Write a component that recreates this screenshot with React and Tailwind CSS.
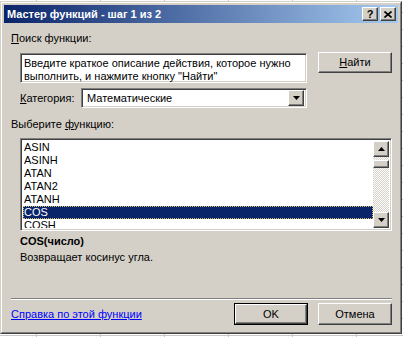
import React from 'react'

const raised = "bg-[#d4d0c8] border border-t-white border-l-white border-r-[#404040] border-b-[#404040] shadow-[inset_-1px_-1px_#808080]"
const sunken = "border border-t-[#808080] border-l-[#808080] border-r-white border-b-white shadow-[inset_1px_1px_#404040,inset_-1px_-1px_#d4d0c8]"

function Arrow({ down }) {
  return (
    <svg width="7" height="4" viewBox="0 0 7 4">
      {down
        ? <path d="M0 0h7L3.5 4z" fill="#000" />
        : <path d="M0 4h7L3.5 0z" fill="#000" />}
    </svg>
  )
}

const functions = ['ASIN', 'ASINH', 'ATAN', 'ATAN2', 'ATANH', 'COS', 'COSH']

export default function App() {
  return (
    <div className="w-[403px] h-[337px] bg-white overflow-hidden font-['Liberation_Sans',Arial,sans-serif] text-[11px] text-black [background-image:linear-gradient(to_right,#c8c8c8_1px,transparent_1px),linear-gradient(to_bottom,#c8c8c8_1px,transparent_1px)] [background-size:64px_100%,100%_17px] [background-position:36px_0,0_12px]">
      {/* Dialog */}
      <div className="mt-[1px] w-[402px] h-[333px] bg-[#d4d0c8] border border-t-[#d4d0c8] border-l-[#d4d0c8] border-r-[#404040] border-b-[#404040]">
        <div className="h-full border border-t-white border-l-white border-r-[#808080] border-b-[#808080] p-[2px] flex flex-col">
          {/* Title bar */}
          <div className="h-[18px] shrink-0 flex items-center pl-[3px] pr-[2px] bg-[linear-gradient(to_right,#0a246a,#a6caf0)]">
            <span className="flex-1 text-white font-bold text-[11px] leading-none">Мастер функций - шаг 1 из 2</span>
            <div className={`w-[16px] h-[14px] flex items-center justify-center font-bold text-[11px] leading-none ${raised}`}>?</div>
            <div className={`ml-[2px] w-[16px] h-[14px] flex items-center justify-center ${raised}`}>
              <svg width="8" height="7" viewBox="0 0 8 7">
                <path d="M0.5 0.5l7 6M7.5 0.5l-7 6" stroke="#000" strokeWidth="1.6" />
              </svg>
            </div>
          </div>

          {/* Body */}
          <div className="flex-1 flex flex-col pl-[7px] pr-[6px]">
            <div className="mt-[9px] leading-[13px]"><u>П</u>оиск функции:</div>

            <div className="mt-[7px] flex items-start">
              <div className={`ml-[9px] mt-[1px] w-[287px] h-[30px] bg-white px-[3px] pt-[3px] leading-[13px] ${sunken}`}>
                Введите краткое описание действия, которое нужно выполнить, и нажмите кнопку "Найти"
              </div>
              <button className={`ml-auto w-[74px] h-[21px] flex items-center justify-center leading-none ${raised}`}>
                <span><u>Н</u>айти</span>
              </button>
            </div>

            <div className="mt-[5px] ml-[9px] flex items-center">
              <span className="w-[61px] leading-[13px]"><u>К</u>атегория:</span>
              <div className={`w-[226px] h-[20px] bg-white flex items-center p-[2px] ${sunken}`}>
                <span className="flex-1 pl-[3px] leading-none">Математические</span>
                <div className={`w-[16px] h-[16px] flex items-center justify-center ${raised}`}>
                  <Arrow down />
                </div>
              </div>
            </div>

            <div className="mt-[10px] leading-[13px]">Выберите <u>ф</u>ункцию:</div>

            <div className={`mt-[7px] ml-[9px] h-[93px] bg-white p-[2px] flex ${sunken}`}>
              <div className="flex-1 overflow-hidden">
                {functions.map(f => (
                  <div key={f} className={`h-[13px] leading-[13px] pl-[1px] whitespace-nowrap ${f === 'COS' ? 'bg-[#0a246a] text-white outline outline-1 outline-dotted outline-[#d8c070] -outline-offset-1' : ''}`}>
                    {f}
                  </div>
                ))}
              </div>
              {/* Scrollbar */}
              <div className="w-[16px] flex flex-col">
                <div className={`w-[16px] h-[16px] flex items-center justify-center ${raised}`}>
                  <Arrow />
                </div>
                <div className="flex-1 bg-[repeating-conic-gradient(#d4d0c8_0_25%,#ffffff_0_50%)] [background-size:2px_2px]">
                  <div className={`mt-[3px] h-[8px] ${raised}`} />
                </div>
                <div className={`w-[16px] h-[16px] flex items-center justify-center ${raised}`}>
                  <Arrow down />
                </div>
              </div>
            </div>

            <div className="mt-[4px] ml-[9px] font-bold leading-[13px]">COS(число)</div>
            <div className="mt-[3px] ml-[9px] leading-[13px]">Возвращает косинус угла.</div>

            <div className="mt-[34px] h-[2px] border-t border-t-[#808080] border-b border-b-white" />

            <div className="mt-[3px] flex items-center">
              <a className="text-[#0000ff] underline leading-[13px]">Справка по этой функции</a>
              <div className="ml-auto w-[74px] h-[22px] border border-black">
                <button className={`w-full h-full flex items-center justify-center leading-none ${raised}`}>OK</button>
              </div>
              <button className={`ml-[10px] w-[74px] h-[22px] flex items-center justify-center leading-none ${raised}`}>Отмена</button>
            </div>
          </div>
        </div>
      </div>
    </div>
  )
}
